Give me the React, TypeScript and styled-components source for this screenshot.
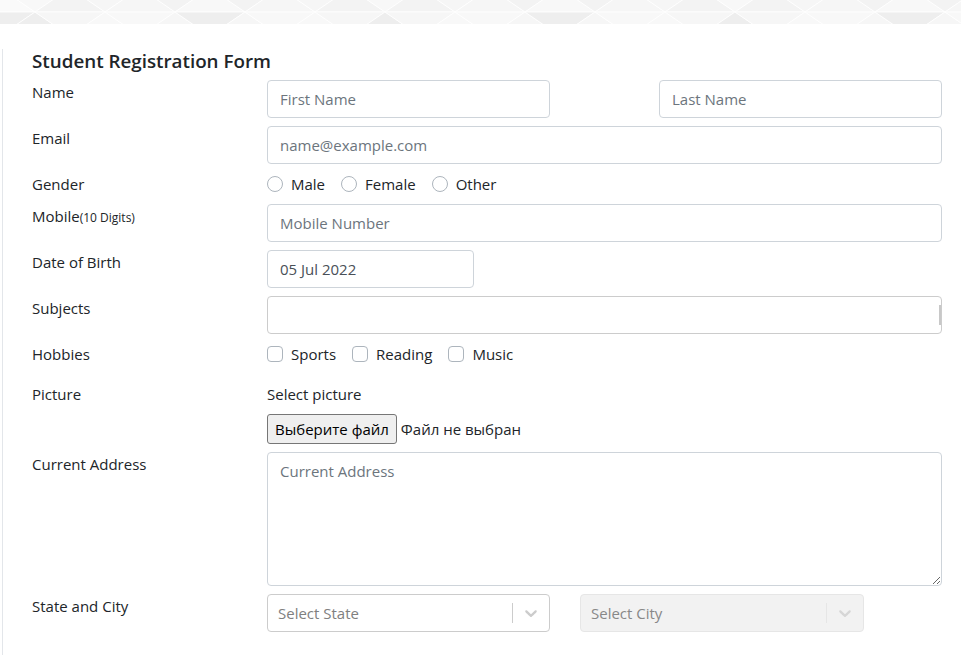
import React from "react";
import styled, { createGlobalStyle } from "styled-components";

const GlobalStyle = createGlobalStyle`
	body {
		margin: 0;
		background: #fff;
		font-family: "Open Sans", "Noto Sans", sans-serif;
		font-size: 15px;
		color: #212529;
	}
	* {
		box-sizing: border-box;
	}
`;

const Banner = styled.div`
	height: 24px;
	overflow: hidden;
	background: #f6f6f6;

	svg {
		display: block;
	}
`;

const Wrapper = styled.div`
	margin: 25px 0 0 2px;
	padding: 0 19px 20px 29px;
	border-left: 1px solid #e3e6ea;
`;

const Title = styled.h5`
	margin: 0 0 7px;
	font-size: 18.8px;
	font-weight: 600;
	line-height: 24px;
`;

const Row = styled.div<{ $gap?: number }>`
	display: grid;
	grid-template-columns: 235px 1fr;
	margin-bottom: ${(p) => p.$gap ?? 8}px;
`;

const Label = styled.div`
	line-height: 24px;

	small {
		font-size: 12px;
	}
`;

const Pair = styled.div<{ $cols: string; $gap: number }>`
	display: grid;
	grid-template-columns: ${(p) => p.$cols};
	column-gap: ${(p) => p.$gap}px;
`;

const Input = styled.input<{ $width?: number }>`
	display: block;
	width: ${(p) => (p.$width ? `${p.$width}px` : "100%")};
	height: 38px;
	padding: 6px 12px;
	font: inherit;
	color: #495057;
	border: 1px solid #ced4da;
	border-radius: 4px;
	outline: none;

	&::placeholder {
		color: #6c757d;
	}
`;

const TextArea = styled.textarea`
	display: block;
	width: 100%;
	height: 134px;
	padding: 6px 12px;
	font: inherit;
	line-height: 24px;
	color: #495057;
	border: 1px solid #ced4da;
	border-radius: 4px;
	outline: none;
	resize: vertical;

	&::placeholder {
		color: #6c757d;
	}
`;

const AutoBox = styled.div`
	position: relative;
	height: 38px;
	border: 1px solid #ccc;
	border-radius: 4px;

	&::after {
		content: "";
		position: absolute;
		right: 0;
		top: 8px;
		width: 2px;
		height: 20px;
		background: #c8c8c8;
	}
`;

const Options = styled.div`
	display: flex;
	align-items: center;
	height: 24px;
`;

const Option = styled.label`
	display: inline-flex;
	align-items: center;
	margin-right: 16px;
	line-height: 24px;
`;

const Mark = styled.span<{ $round?: boolean }>`
	width: 16px;
	height: 16px;
	margin-right: 8px;
	border: 1px solid #adb5bd;
	border-radius: ${(p) => (p.$round ? "50%" : "4px")};
	background: #fff;
`;

const FileText = styled.div`
	line-height: 24px;
	margin-bottom: 8px;
`;

const FileLine = styled.div`
	display: flex;
	align-items: center;
	height: 30px;
`;

const FileButton = styled.button`
	height: 30px;
	padding: 1px 7px;
	margin-right: 4px;
	font: inherit;
	color: #000;
	background: #efefef;
	border: 1px solid #767676;
	border-radius: 3px;
`;

const Select = styled.div<{ $disabled?: boolean }>`
	display: flex;
	align-items: center;
	height: 38px;
	background: ${(p) => (p.$disabled ? "#f2f2f2" : "#fff")};
	border: 1px solid ${(p) => (p.$disabled ? "#e6e6e6" : "#ccc")};
	border-radius: 4px;
	color: ${(p) => (p.$disabled ? "#888" : "#808080")};
`;

const SelectValue = styled.div`
	flex: 1;
	padding: 2px 10px;
`;

const Separator = styled.span<{ $disabled?: boolean }>`
	align-self: stretch;
	width: 1px;
	margin: 8px 0;
	background: ${(p) => (p.$disabled ? "#e6e6e6" : "#ccc")};
`;

const Indicator = styled.span<{ $disabled?: boolean }>`
	display: flex;
	padding: 8px;
	color: ${(p) => (p.$disabled ? "#d6d6d6" : "#ccc")};
`;

const Chevron = () => (
	<svg width='20' height='20' viewBox='0 0 20 20' fill='currentColor'>
		<path d='M4.516 7.548c0.436-0.446 1.043-0.481 1.576 0l3.908 3.747 3.908-3.747c0.533-0.481 1.141-0.446 1.574 0 0.436 0.445 0.408 1.197 0 1.615-0.406 0.418-4.695 4.502-4.695 4.502-0.217 0.223-0.502 0.335-0.787 0.335s-0.57-0.112-0.789-0.335c0 0-4.287-4.084-4.695-4.502s-0.436-1.17 0-1.615z' />
	</svg>
);

const shades = ["#f8f8f8", "#f3f3f3", "#fbfbfb", "#eeeeee", "#f6f6f6", "#f0f0f0", "#fafafa"];

const Pattern = () => {
	const tris: React.ReactNode[] = [];
	for (let r = 0; r < 2; r++) {
		const y0 = -12 + r * 24;
		const y1 = y0 + 24;
		for (let k = -1; k < 30; k++) {
			const x = k * 35;
			const down = (k + r) % 2 === 0;
			const pts = down
				? `${x},${y0} ${x + 70},${y0} ${x + 35},${y1}`
				: `${x},${y1} ${x + 70},${y1} ${x + 35},${y0}`;
			const fill = shades[Math.abs(k * 7 + r * 3 + ((k * k) % 5)) % shades.length];
			tris.push(<polygon key={`${r}-${k}`} points={pts} fill={fill} stroke='#fff' strokeWidth='0.8' />);
		}
	}
	return (
		<svg width='961' height='24' viewBox='0 0 961 24'>
			{tris}
		</svg>
	);
};

const App = () => {
	return (
		<>
			<GlobalStyle />
			<Banner>
				<Pattern />
			</Banner>
			<Wrapper>
				<Title>Student Registration Form</Title>

				<Row>
					<Label>Name</Label>
					<Pair $cols='1fr 1fr' $gap={109}>
						<Input placeholder='First Name' readOnly />
						<Input placeholder='Last Name' readOnly />
					</Pair>
				</Row>

				<Row>
					<Label>Email</Label>
					<Input placeholder='name@example.com' readOnly />
				</Row>

				<Row>
					<Label>Gender</Label>
					<Options>
						{["Male", "Female", "Other"].map((g) => (
							<Option key={g}>
								<Mark $round />
								{g}
							</Option>
						))}
					</Options>
				</Row>

				<Row>
					<Label>
						Mobile<small>(10 Digits)</small>
					</Label>
					<Input placeholder='Mobile Number' readOnly />
				</Row>

				<Row>
					<Label>Date of Birth</Label>
					<Input $width={207} value='05 Jul 2022' readOnly />
				</Row>

				<Row>
					<Label>Subjects</Label>
					<AutoBox />
				</Row>

				<Row $gap={16}>
					<Label>Hobbies</Label>
					<Options>
						{["Sports", "Reading", "Music"].map((h) => (
							<Option key={h}>
								<Mark />
								{h}
							</Option>
						))}
					</Options>
				</Row>

				<Row>
					<Label>Picture</Label>
					<div>
						<FileText>Select picture</FileText>
						<FileLine>
							<FileButton type='button'>Выберите файл</FileButton>
							<span>Файл не выбран</span>
						</FileLine>
					</div>
				</Row>

				<Row>
					<Label>Current Address</Label>
					<TextArea placeholder='Current Address' readOnly />
				</Row>

				<Row>
					<Label>State and City</Label>
					<Pair $cols='283px 284px' $gap={30}>
						<Select>
							<SelectValue>Select State</SelectValue>
							<Separator />
							<Indicator>
								<Chevron />
							</Indicator>
						</Select>
						<Select $disabled>
							<SelectValue>Select City</SelectValue>
							<Separator $disabled />
							<Indicator $disabled>
								<Chevron />
							</Indicator>
						</Select>
					</Pair>
				</Row>
			</Wrapper>
		</>
	);
};

export default App;
